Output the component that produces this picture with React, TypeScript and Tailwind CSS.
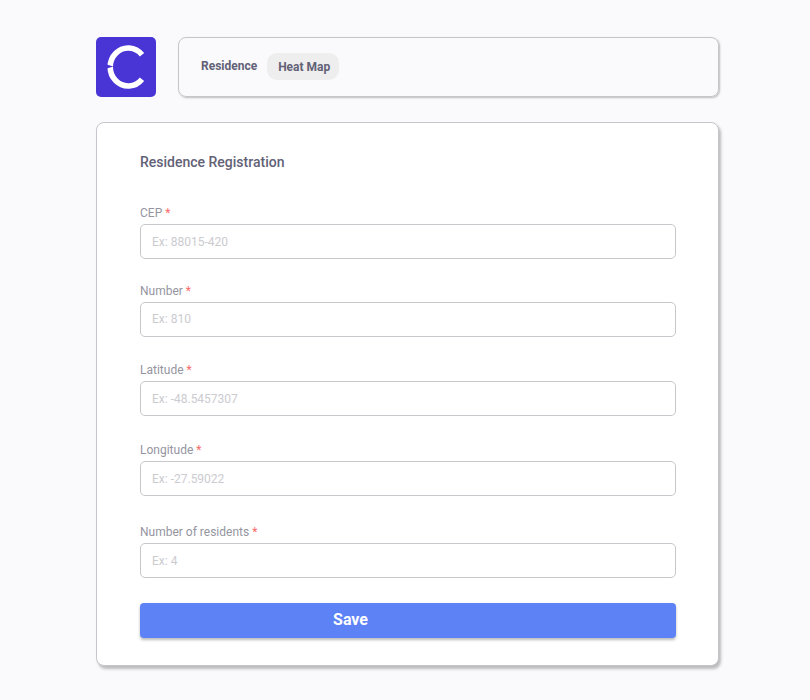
const fields = [
  { label: "CEP", placeholder: "Ex: 88015-420", spacing: "mb-6", inset: "" },
  { label: "Number", placeholder: "Ex: 810", spacing: "mb-[25px]", inset: "pb-0.5" },
  { label: "Latitude", placeholder: "Ex: -48.5457307", spacing: "mb-[26px]", inset: "" },
  { label: "Longitude", placeholder: "Ex: -27.59022", spacing: "mb-7", inset: "" },
  { label: "Number of residents", placeholder: "Ex: 4", spacing: "mb-[25px]", inset: "" },
];

function Logo() {
  return (
    <div className="h-[60px] w-[60px] overflow-hidden rounded-[5px] bg-[#4935d6]">
      <svg viewBox="0 0 60 60" className="h-full w-full" fill="none">
        <path d="M46 17.8A18 19 0 1 0 46 42.2" stroke="#fff" strokeWidth="5.6" />
        <path d="M9 27L17.4 29.6L9 32Z" fill="#4935d6" />
      </svg>
    </div>
  );
}

export default function App() {
  return (
    <main className="min-h-[700px] bg-[#fafafc] pt-[37px] font-['Roboto',sans-serif] text-[#626176]">
      <div className="ml-24 w-[623px]">
        <header className="flex gap-[22px]">
          <Logo />
          <nav className="flex h-[60px] w-[541px] items-center rounded-lg border border-[#c5c5cb] pl-[22px] text-xs font-bold shadow-[1px_1px_2px_rgba(0,0,0,0.25)]">
            <a className="-mt-0.5">Residence</a>
            <a className="mb-px ml-[10px] flex h-[27px] w-[72px] items-center justify-center rounded-[10px] bg-[#eeeeee] pt-px pl-0.5">Heat Map</a>
          </nav>
        </header>

        <section className="mt-[25px] h-[544px] rounded-lg border border-[#c5c5cb] bg-white pt-[29px] pr-[42px] pl-[43px] shadow-[2px_3px_3px_rgba(0,0,0,0.25)]">
          <h1 className="text-sm leading-5 font-medium">Residence Registration</h1>
          <form className="mt-[33px]">
            {fields.map(({ label, placeholder, spacing, inset }) => (
              <div key={label} className={spacing}>
                <label className="mb-[3px] block text-xs leading-4 text-[#95959f]">
                  {label} <span className="text-[#f96a6a]">*</span>
                </label>
                <input
                  placeholder={placeholder}
                  className={`block h-[35px] w-full rounded-[5px] border border-[#c8c8cc] px-[11px] text-xs placeholder:text-[#cbcbd0] ${inset}`}
                />
              </div>
            ))}
            <button type="button" className="block h-[35px] w-full rounded bg-[#5c82f6] pr-[115px] pb-0.5 text-base leading-[33px] font-bold text-white shadow-[0_2px_3px_rgba(0,0,0,0.27)]">
              Save
            </button>
          </form>
        </section>
      </div>
    </main>
  );
}
